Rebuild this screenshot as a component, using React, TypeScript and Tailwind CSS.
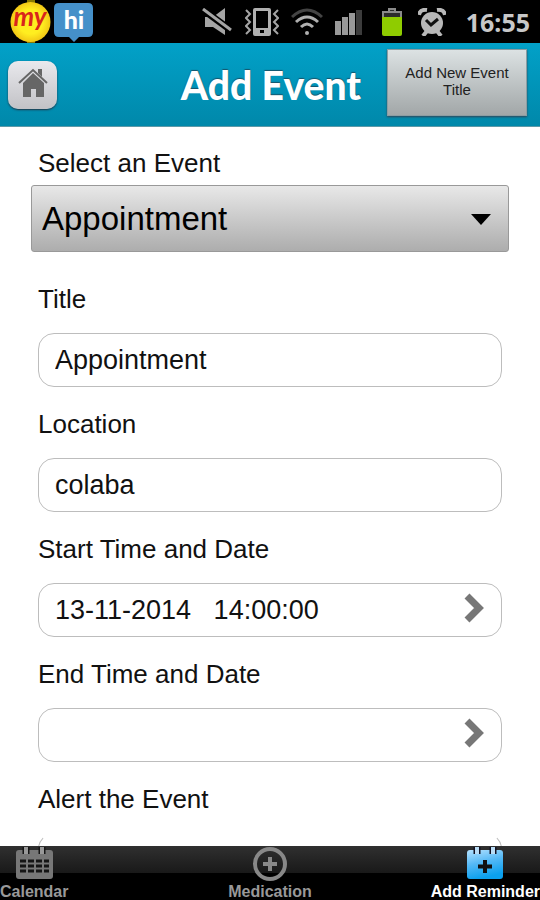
import { useState } from "react";

interface FieldProps {
  id: string;
  label: string;
  value: string;
  onChange: (value: string) => void;
  picker?: boolean;
}

const Field: React.FC<FieldProps> = ({ id, label, value, onChange, picker }) => (
  <div>
    <label htmlFor={id} className="block text-[26px] leading-8">{label}</label>
    <div className="mt-[18px] flex h-[54px] items-center rounded-2xl border border-[#bdbdbd] bg-white px-4">
      <input
        id={id}
        type="text"
        value={value}
        onChange={(e) => onChange(e.target.value)}
        className="h-full min-w-0 flex-1 bg-transparent text-[27px] outline-none"
      />
      {picker &&
        <button type="button" aria-label={`Choose ${label}`} className="pb-1">
          <svg width="21" height="30" viewBox="0 0 21 30" fill="none" stroke="#777" strokeWidth="7">
            <path d="M3 3 15 15 3 27" />
          </svg>
        </button>
      }
    </div>
  </div>
);

const StatusBar: React.FC = () => (
  <div className="flex h-[43px] shrink-0 items-center bg-black px-[10px]">
    <svg width="41" height="43" viewBox="0 0 41 43">
      <defs>
        <radialGradient id="sun">
          <stop offset="0.600" stopColor="#ffee20" />
          <stop offset="1" stopColor="#f2c715" />
        </radialGradient>
      </defs>
      <path d="M17 0h8v43h-8z" fill="#8a7a00" />
      <circle cx="20.500" cy="22" r="20" fill="url(#sun)" />
      <text x="20" y="26" textAnchor="middle" fontFamily="Lato, sans-serif" fontStyle="italic" fontWeight="700" fontSize="26" fill="#d9251c">my</text>
    </svg>
    <svg className="ml-[3px]" width="39" height="40" viewBox="0 0 39 40">
      <path d="M5 1h29q5 0 5 5v24q0 5-5 5H25l-5 5-5-5H5q-5 0-5-5V6q0-5 5-5z" fill="#4590c9" />
      <text x="20" y="27" textAnchor="middle" fontFamily="Lato, sans-serif" fontWeight="900" fontSize="25" fill="#fff">hi</text>
    </svg>

    <div className="ml-auto flex items-center gap-3">
      <svg width="31" height="28" viewBox="0 0 31 28">
        <path d="M3 9h8L23 0v27L11 19H3z" fill="#a5a5a5" />
        <path d="M0 1 30 23" stroke="#000" strokeWidth="7" />
        <path d="M1 1 29 22" stroke="#a5a5a5" strokeWidth="3" />
      </svg>
      <svg width="34" height="28" viewBox="0 0 34 28">
        <path d="M10 0h14q2 0 2 2v24q0 2-2 2H10q-2 0-2-2V2q0-2 2-2zm1 3v17h12V3zm4 19v3h4v-3z" fill="#b0b0b0" fillRule="evenodd" />
        <path d="M1 2l4 4-4 4 4 4-4 4 4 4-4 4M33 2l-4 4 4 4-4 4 4 4-4 4 4 4" fill="none" stroke="#a5a5a5" strokeWidth="2" />
      </svg>
      <svg width="32" height="28" viewBox="0 0 32 28" fill="none" strokeWidth="3">
        <path d="M1 9q15-14 30 0" stroke="#444" />
        <path d="M5 14q11-10 22 0M10 19q6-6 12 0" stroke="#b0b0b0" />
        <circle cx="16" cy="25" r="2" fill="#b0b0b0" stroke="none" />
      </svg>
      <svg width="27" height="26" viewBox="0 0 27 26" fill="#999">
        <path d="M0 12h6v14H0zM7 8h6v18H7zM14 4h6v22h-6z" />
        <path d="M21 1h6v25h-6z" fill="#3c3c3c" />
      </svg>
      <svg className="ml-2" width="20" height="28" viewBox="0 0 20 28">
        <path d="M7 3V1h6v2M1 10V4h18v6" fill="#2c2c2c" stroke="#8a8a8a" strokeWidth="2" />
        <path d="M0 9h20v17q0 2-2 2H2q-2 0-2-2z" fill="#8fcc00" />
      </svg>
      <svg className="ml-1" width="28" height="28" viewBox="0 0 28 28">
        <path d="M1 7Q2 1 9 2M27 7Q26 1 19 2M5 28l4-5M23 28l-4-5" stroke="#b8b8b8" strokeWidth="4" fill="none" />
        <circle cx="14" cy="15" r="11" fill="#b8b8b8" />
        <path d="M8 12l5 5 7-6" fill="none" stroke="#111" strokeWidth="3" />
      </svg>
      <span className="ml-2 font-['Noto_Sans',sans-serif] text-[25px] font-bold leading-8 text-[#c8c8c8]">16:55</span>
    </div>
  </div>
);

const Header: React.FC = () => (
  <header className="flex h-[84px] shrink-0 items-center border-b border-[#5c99a8] bg-linear-to-b from-[#02a1c8] to-[#0088aa] pl-2 pr-[13px]">
    <button type="button" aria-label="Home" className="flex h-12 w-[49px] items-center justify-center rounded-[10px] bg-linear-to-b from-[#e9e9ed] to-[#c2c2c6] pb-1 shadow-[0_1px_2px_#234]">
      <svg width="30" height="32" viewBox="0 0 30 32">
        <path d="M20 2h4v8l-4-4z" fill="#666" />
        <path d="M1 16 15 3l14 13" fill="none" stroke="#666" strokeWidth="2" />
        <path d="M15 6 26 16v14h-8v-8h-5v8H5V16z" fill="#666" />
      </svg>
    </button>
    <h1 className="flex-1 pr-[26px] text-right font-[Lato,sans-serif] text-[39px] font-black leading-[44px] text-white [text-shadow:0_-1px_1px_#17546a]">Add Event</h1>
    <button type="button" className="mb-1 h-[67px] w-[140px] border border-[#8d9da2] bg-linear-to-b from-[#dce2e3] to-[#a2a7a8] px-3 pb-1 text-[15px] leading-[17px] text-[#222] shadow-[0_1px_2px_#345]">
      Add New Event Title
    </button>
  </header>
);

const CalendarIcon: React.FC = () => (
  <svg width="37" height="34" viewBox="0 0 37 34">
    <rect x="0" y="4" width="37" height="29" rx="3" fill="#777" />
    <path d="M4 15h29M4 20h29M4 25h29" stroke="#151515" strokeWidth="3" strokeDasharray="6 2" />
    <path d="M10 1v7M26 1v7" stroke="#151515" strokeWidth="7" />
    <path d="M10 1v7M26 1v7" stroke="#999" strokeWidth="4" />
  </svg>
);

const MedicationIcon: React.FC = () => (
  <svg width="36" height="36" viewBox="0 0 36 36" fill="none" stroke="#888">
    <circle cx="18" cy="18" r="15" strokeWidth="4" />
    <path d="M18 11v14M11 18h14" strokeWidth="4" />
  </svg>
);

const ReminderIcon: React.FC = () => (
  <svg width="36" height="34" viewBox="0 0 36 34">
    <defs>
      <linearGradient id="reminder" x1="0" y1="0" x2="0.300" y2="1">
        <stop offset="0" stopColor="#b5e2ff" />
        <stop offset="0.500" stopColor="#54b8f5" />
        <stop offset="1" stopColor="#0ba0ee" />
      </linearGradient>
    </defs>
    <rect x="0" y="4" width="36" height="29" rx="3" fill="url(#reminder)" />
    <path d="M10 1v7M26 1v7" stroke="#112" strokeWidth="7" />
    <path d="M10 1v7M26 1v7" stroke="#b9dcf5" strokeWidth="4" />
    <path d="M18 14v13M11 20.500h14" stroke="#111" strokeWidth="4" />
  </svg>
);

const App: React.FC = () => {
  const [event, setEvent] = useState("Appointment");
  const [title, setTitle] = useState("Appointment");
  const [location, setLocation] = useState("colaba");
  const [start, setStart] = useState("13-11-2014   14:00:00");
  const [end, setEnd] = useState("");
  const [alert, setAlert] = useState("");

  return (
    <div className="flex h-screen flex-col bg-white font-['Liberation_Sans',Arial,sans-serif] text-[#111]">
      <StatusBar />
      <Header />

      <main className="min-h-0 flex-1 overflow-hidden px-[31px] pt-5">
        <form>
          <label htmlFor="event" className="block pl-[7px] text-[26px] leading-8">Select an Event</label>
          <div className="relative mt-[6px]">
            <select
              id="event"
              value={event}
              onChange={(e) => setEvent(e.target.value)}
              className="h-[67px] w-full appearance-none rounded-[3px] border border-[#999] bg-linear-to-b from-[#e8e8e8] to-[#adadad] pl-[10px] text-[33px] text-black outline-none"
            >
              <option>Appointment</option>
              <option>Medication</option>
            </select>
            <svg className="pointer-events-none absolute right-[18px] top-[29px]" width="20" height="11" viewBox="0 0 20 11">
              <path d="M0 0h20L10 11z" fill="#000" />
            </svg>
          </div>

          <div className="mt-[31px] flex flex-col gap-[21px] px-[7px]">
            <Field id="title" label="Title" value={title} onChange={setTitle} />
            <Field id="location" label="Location" value={location} onChange={setLocation} />
            <Field id="start" label="Start Time and Date" value={start} onChange={setStart} picker />
            <Field id="end" label="End Time and Date" value={end} onChange={setEnd} picker />
            <div>
              <label htmlFor="alert" className="block text-[26px] leading-8">Alert the Event</label>
              <input
                id="alert"
                type="text"
                value={alert}
                onChange={(e) => setAlert(e.target.value)}
                className="mt-[18px] h-[54px] w-full rounded-2xl border border-[#bdbdbd] border-t-transparent px-4 text-[27px] outline-none"
              />
            </div>
          </div>
        </form>
      </main>

      <nav className="grid h-[54px] shrink-0 grid-cols-3 bg-linear-to-b from-[#303030] from-0% via-[#191919] via-50% to-black to-50% text-base font-bold leading-4 text-[#999]">
        <a href="#calendar" className="flex flex-col items-center justify-between justify-self-start">
          <CalendarIcon />
          Calendar
        </a>
        <a href="#medication" className="flex flex-col items-center justify-between justify-self-center">
          <MedicationIcon />
          Medication
        </a>
        <a href="#reminder" className="flex flex-col items-center justify-between justify-self-end text-white">
          <ReminderIcon />
          Add Reminder
        </a>
      </nav>
    </div>
  );
};

export default App;
